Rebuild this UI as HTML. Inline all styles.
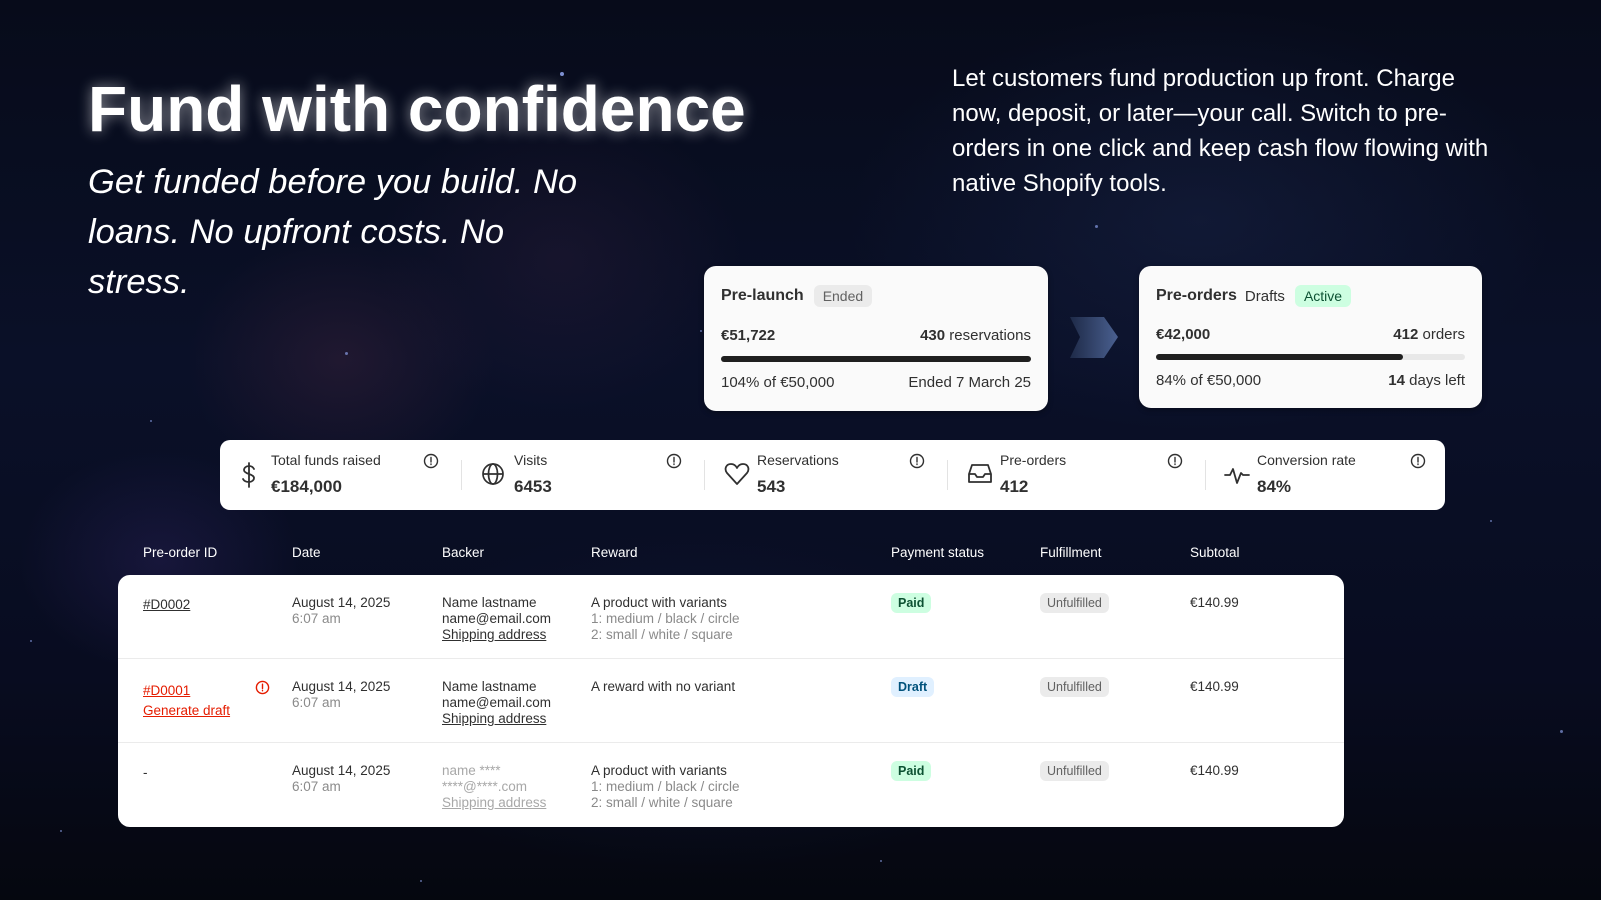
<!DOCTYPE html>
<html><head><meta charset="utf-8"><style>
*{margin:0;padding:0;box-sizing:border-box}
body{width:1601px;height:900px;overflow:hidden;font-family:"Liberation Sans",sans-serif;position:relative;
background:
radial-gradient(ellipse 220px 180px at 340px 360px,rgba(90,45,70,.28),transparent 70%),
radial-gradient(ellipse 260px 220px at 560px 260px,rgba(70,40,75,.22),transparent 70%),
radial-gradient(ellipse 200px 160px at 160px 560px,rgba(60,45,120,.28),transparent 70%),
radial-gradient(ellipse 500px 300px at 1200px 220px,rgba(35,50,95,.3),transparent 70%),
radial-gradient(ellipse 500px 250px at 700px 700px,rgba(25,35,70,.35),transparent 70%),
linear-gradient(180deg,#070b1a 0%,#0a1028 40%,#080c20 75%,#05070f 100%);}
.abs{position:absolute}
h1{position:absolute;left:88px;top:72px;font-size:64px;font-weight:700;color:#fff;letter-spacing:0;text-shadow:0 0 14px rgba(255,255,255,.55)}
.sub{left:88px;top:157px;font-size:34.5px;font-style:italic;color:#fff;line-height:50px;white-space:nowrap}
.para{left:952px;top:61px;font-size:24px;color:#fff;line-height:35px;white-space:nowrap}
.card{position:absolute;background:#fafafa;border-radius:12px;box-shadow:0 2px 6px rgba(0,0,0,.3);color:#303030;font-size:15px}
.card .t{position:absolute;left:17px;top:19px;font-weight:700;font-size:16px;display:flex;align-items:center;gap:10px}
.badge{font-weight:400;font-size:14px;padding:3px 9px;border-radius:6px}
.row{position:absolute;left:17px;right:17px;display:flex;justify-content:space-between}
.bar{position:absolute;left:17px;right:17px;height:6px;border-radius:3px;background:#e8e8e8}
.stats{position:absolute;left:220px;top:440px;width:1225px;height:70px;background:#fff;border-radius:10px}
.st{position:absolute;top:0;height:70px}
.st .ic{position:absolute;left:0;top:22px}
.st .l{position:absolute;left:33px;top:12px;font-size:14px;color:#303030;white-space:nowrap}
.st .v{position:absolute;left:33px;top:37px;font-size:17px;font-weight:700;color:#303030}
.stats .i{position:absolute;top:13px}
.sep{position:absolute;top:20px;width:1px;height:30px;background:#e3e3e3}
.th{position:absolute;top:545px;font-size:13.5px;color:#fff}
.table{position:absolute;left:118px;top:575px;width:1226px;height:252px;background:#fff;border-radius:12px}
.tr{position:absolute;left:0;right:0;height:84px}
.tr+.tr{border-top:1.5px solid #ebebeb}
.c{position:absolute;top:20px;font-size:13.5px;color:#303030;line-height:16px}
.g{color:#8a8a8a}
.u{text-decoration:underline}
.pill{display:inline-block;font-size:12.5px;padding:2px 7px;border-radius:6px;font-weight:600}
.stars i{position:absolute;width:2px;height:2px;border-radius:50%;background:#9ab0ff;opacity:.6}
</style></head><body>
<div class="stars">
<i style="left:560px;top:72px;width:4px;height:4px;opacity:.8"></i><i style="left:345px;top:352px;width:3px;height:3px"></i><i style="left:1095px;top:225px;width:3px;height:3px"></i><i style="left:1490px;top:520px"></i><i style="left:1560px;top:730px;width:3px;height:3px"></i><i style="left:30px;top:640px"></i><i style="left:60px;top:830px"></i><i style="left:880px;top:860px"></i><i style="left:1260px;top:140px"></i><i style="left:420px;top:880px"></i><i style="left:150px;top:420px"></i><i style="left:700px;top:330px"></i>
</div>
<h1>Fund with confidence</h1>
<div class="abs sub">Get funded before you build. No<br>loans. No upfront costs. No<br>stress.</div>
<div class="abs para">Let customers fund production up front. Charge<br>now, deposit, or later—your call. Switch to pre-<br>orders in one click and keep cash flow flowing with<br>native Shopify tools.</div>

<div class="card" style="left:704px;top:266px;width:344px;height:145px">
 <div class="t">Pre-launch <span class="badge" style="background:#ebebeb;color:#616161">Ended</span></div>
 <div class="row" style="top:61px"><b>€51,722</b><span><b>430</b> reservations</span></div>
 <div class="bar" style="top:90px;background:#1f1f1f"></div>
 <div class="row" style="top:108px"><span>104% of €50,000</span><span>Ended 7 March 25</span></div>
</div>
<svg class="abs" style="left:1066px;top:315px" width="54" height="45" viewBox="0 0 54 45"><defs><linearGradient id="ag" x1="0" x2="1"><stop offset="0" stop-color="#1e2a48"/><stop offset="1" stop-color="#4a6090"/></linearGradient></defs><path d="M4 2H38L52 22L38 43H4L14 22Z" fill="url(#ag)"/></svg>
<div class="card" style="left:1139px;top:266px;width:343px;height:142px">
 <div class="t">Pre-orders <span style="font-weight:400;font-size:15px;margin-left:-2px">Drafts</span><span class="badge" style="background:#cdfee1;color:#0c5132">Active</span></div>
 <div class="row" style="top:60px"><b>€42,000</b><span><b>412</b> orders</span></div>
 <div class="bar" style="top:88px"><div style="width:80%;height:6px;border-radius:3px;background:#1f1f1f"></div></div>
 <div class="row" style="top:106px"><span>84% of €50,000</span><span><b>14</b> days left</span></div>
</div>

<div class="stats">
 <div class="st" style="left:18px"><svg class="ic" width="22" height="26" viewBox="0 0 22 26" fill="none" stroke="#303030" stroke-width="1.8" stroke-linecap="round"><path d="M11 1v24M16 7c-1-2-3-3-5-3-3 0-5 2-5 4s2 3 5 4 5 2 5 4-2 4-5 4c-3 0-5-1-6-3"/></svg><div class="l">Total funds raised</div><div class="v">€184,000</div></div>
 <svg class="i" style="left:203px" width="16" height="16" viewBox="0 0 16 16" fill="none" stroke="#303030" stroke-width="1.4"><circle cx="8" cy="8" r="6.5"/><path d="M8 4.5v4.5M8 11v.5" stroke-linecap="round"/></svg>
 <div class="sep" style="left:241px"></div>
 <div class="st" style="left:261px"><svg class="ic" width="24" height="24" viewBox="0 0 24 24" fill="none" stroke="#303030" stroke-width="1.7"><circle cx="12" cy="12" r="10"/><ellipse cx="12" cy="12" rx="4.5" ry="10"/><path d="M2 12h20"/></svg><div class="l">Visits</div><div class="v">6453</div></div>
 <svg class="i" style="left:446px" width="16" height="16" viewBox="0 0 16 16" fill="none" stroke="#303030" stroke-width="1.4"><circle cx="8" cy="8" r="6.5"/><path d="M8 4.5v4.5M8 11v.5" stroke-linecap="round"/></svg>
 <div class="sep" style="left:484px"></div>
 <div class="st" style="left:504px"><svg class="ic" width="26" height="24" viewBox="0 0 26 24" fill="none" stroke="#303030" stroke-width="1.8" stroke-linejoin="round"><path d="M13 22L3 11C0 7 2 2 7 2c3 0 5 2 6 4 1-2 3-4 6-4 5 0 7 5 4 9z"/></svg><div class="l">Reservations</div><div class="v">543</div></div>
 <svg class="i" style="left:689px" width="16" height="16" viewBox="0 0 16 16" fill="none" stroke="#303030" stroke-width="1.4"><circle cx="8" cy="8" r="6.5"/><path d="M8 4.5v4.5M8 11v.5" stroke-linecap="round"/></svg>
 <div class="sep" style="left:727px"></div>
 <div class="st" style="left:747px"><svg class="ic" width="26" height="24" viewBox="0 0 26 24" fill="none" stroke="#303030" stroke-width="1.8" stroke-linejoin="round"><path d="M5 3h16l3 9v8H2v-8z M2 12h6l2 3h6l2-3h6"/></svg><div class="l">Pre-orders</div><div class="v">412</div></div>
 <svg class="i" style="left:947px" width="16" height="16" viewBox="0 0 16 16" fill="none" stroke="#303030" stroke-width="1.4"><circle cx="8" cy="8" r="6.5"/><path d="M8 4.5v4.5M8 11v.5" stroke-linecap="round"/></svg>
 <div class="sep" style="left:985px"></div>
 <div class="st" style="left:1004px"><svg class="ic" width="26" height="26" viewBox="0 0 26 26" fill="none" stroke="#303030" stroke-width="1.8" stroke-linejoin="round" stroke-linecap="round"><path d="M1 13h5l3-6 4 14 4-10 2 2h6"/></svg><div class="l">Conversion rate</div><div class="v">84%</div></div>
 <svg class="i" style="left:1190px" width="16" height="16" viewBox="0 0 16 16" fill="none" stroke="#303030" stroke-width="1.4"><circle cx="8" cy="8" r="6.5"/><path d="M8 4.5v4.5M8 11v.5" stroke-linecap="round"/></svg>
</div>

<div class="th" style="left:143px">Pre-order ID</div>
<div class="th" style="left:292px">Date</div>
<div class="th" style="left:442px">Backer</div>
<div class="th" style="left:591px">Reward</div>
<div class="th" style="left:891px">Payment status</div>
<div class="th" style="left:1040px">Fulfillment</div>
<div class="th" style="left:1190px">Subtotal</div>

<div class="table">
 <div class="tr" style="top:0">
  <div class="c u" style="left:25px;top:22px">#D0002</div>
  <div class="c" style="left:174px">August 14, 2025<br><span class="g">6:07 am</span></div>
  <div class="c" style="left:324px">Name lastname<br>name@email.com<br><span class="u">Shipping address</span></div>
  <div class="c" style="left:473px">A product with variants<br><span class="g">1: medium / black / circle<br>2: small / white / square</span></div>
  <div class="c" style="left:773px;top:18px"><span class="pill" style="background:#cdfee1;color:#0c5132">Paid</span></div>
  <div class="c" style="left:922px;top:18px"><span class="pill" style="background:#ebebeb;color:#616161;font-weight:500">Unfulfilled</span></div>
  <div class="c" style="left:1072px">€140.99</div>
 </div>
 <div class="tr" style="top:83px">
  <div class="c u" style="left:25px;top:22px;color:#e51c00;line-height:20px">#D0001<br>Generate draft</div>
  <svg class="abs" style="left:137px;top:21px" width="15" height="15" viewBox="0 0 16 16" fill="none" stroke="#e51c00" stroke-width="1.5"><circle cx="8" cy="8" r="6.5"/><path d="M8 4.5v4.5M8 11v.5" stroke-linecap="round"/></svg>
  <div class="c" style="left:174px">August 14, 2025<br><span class="g">6:07 am</span></div>
  <div class="c" style="left:324px">Name lastname<br>name@email.com<br><span class="u">Shipping address</span></div>
  <div class="c" style="left:473px">A reward with no variant</div>
  <div class="c" style="left:773px;top:18px"><span class="pill" style="background:#e0f0ff;color:#00527c">Draft</span></div>
  <div class="c" style="left:922px;top:18px"><span class="pill" style="background:#ebebeb;color:#616161;font-weight:500">Unfulfilled</span></div>
  <div class="c" style="left:1072px">€140.99</div>
 </div>
 <div class="tr" style="top:167px">
  <div class="c" style="left:25px;top:22px">-</div>
  <div class="c" style="left:174px">August 14, 2025<br><span class="g">6:07 am</span></div>
  <div class="c" style="left:324px;color:#a8a8a8">name ****<br>****@****.com<br><span class="u">Shipping address</span></div>
  <div class="c" style="left:473px">A product with variants<br><span class="g">1: medium / black / circle<br>2: small / white / square</span></div>
  <div class="c" style="left:773px;top:18px"><span class="pill" style="background:#cdfee1;color:#0c5132">Paid</span></div>
  <div class="c" style="left:922px;top:18px"><span class="pill" style="background:#ebebeb;color:#616161;font-weight:500">Unfulfilled</span></div>
  <div class="c" style="left:1072px">€140.99</div>
 </div>
</div>
</body></html>
